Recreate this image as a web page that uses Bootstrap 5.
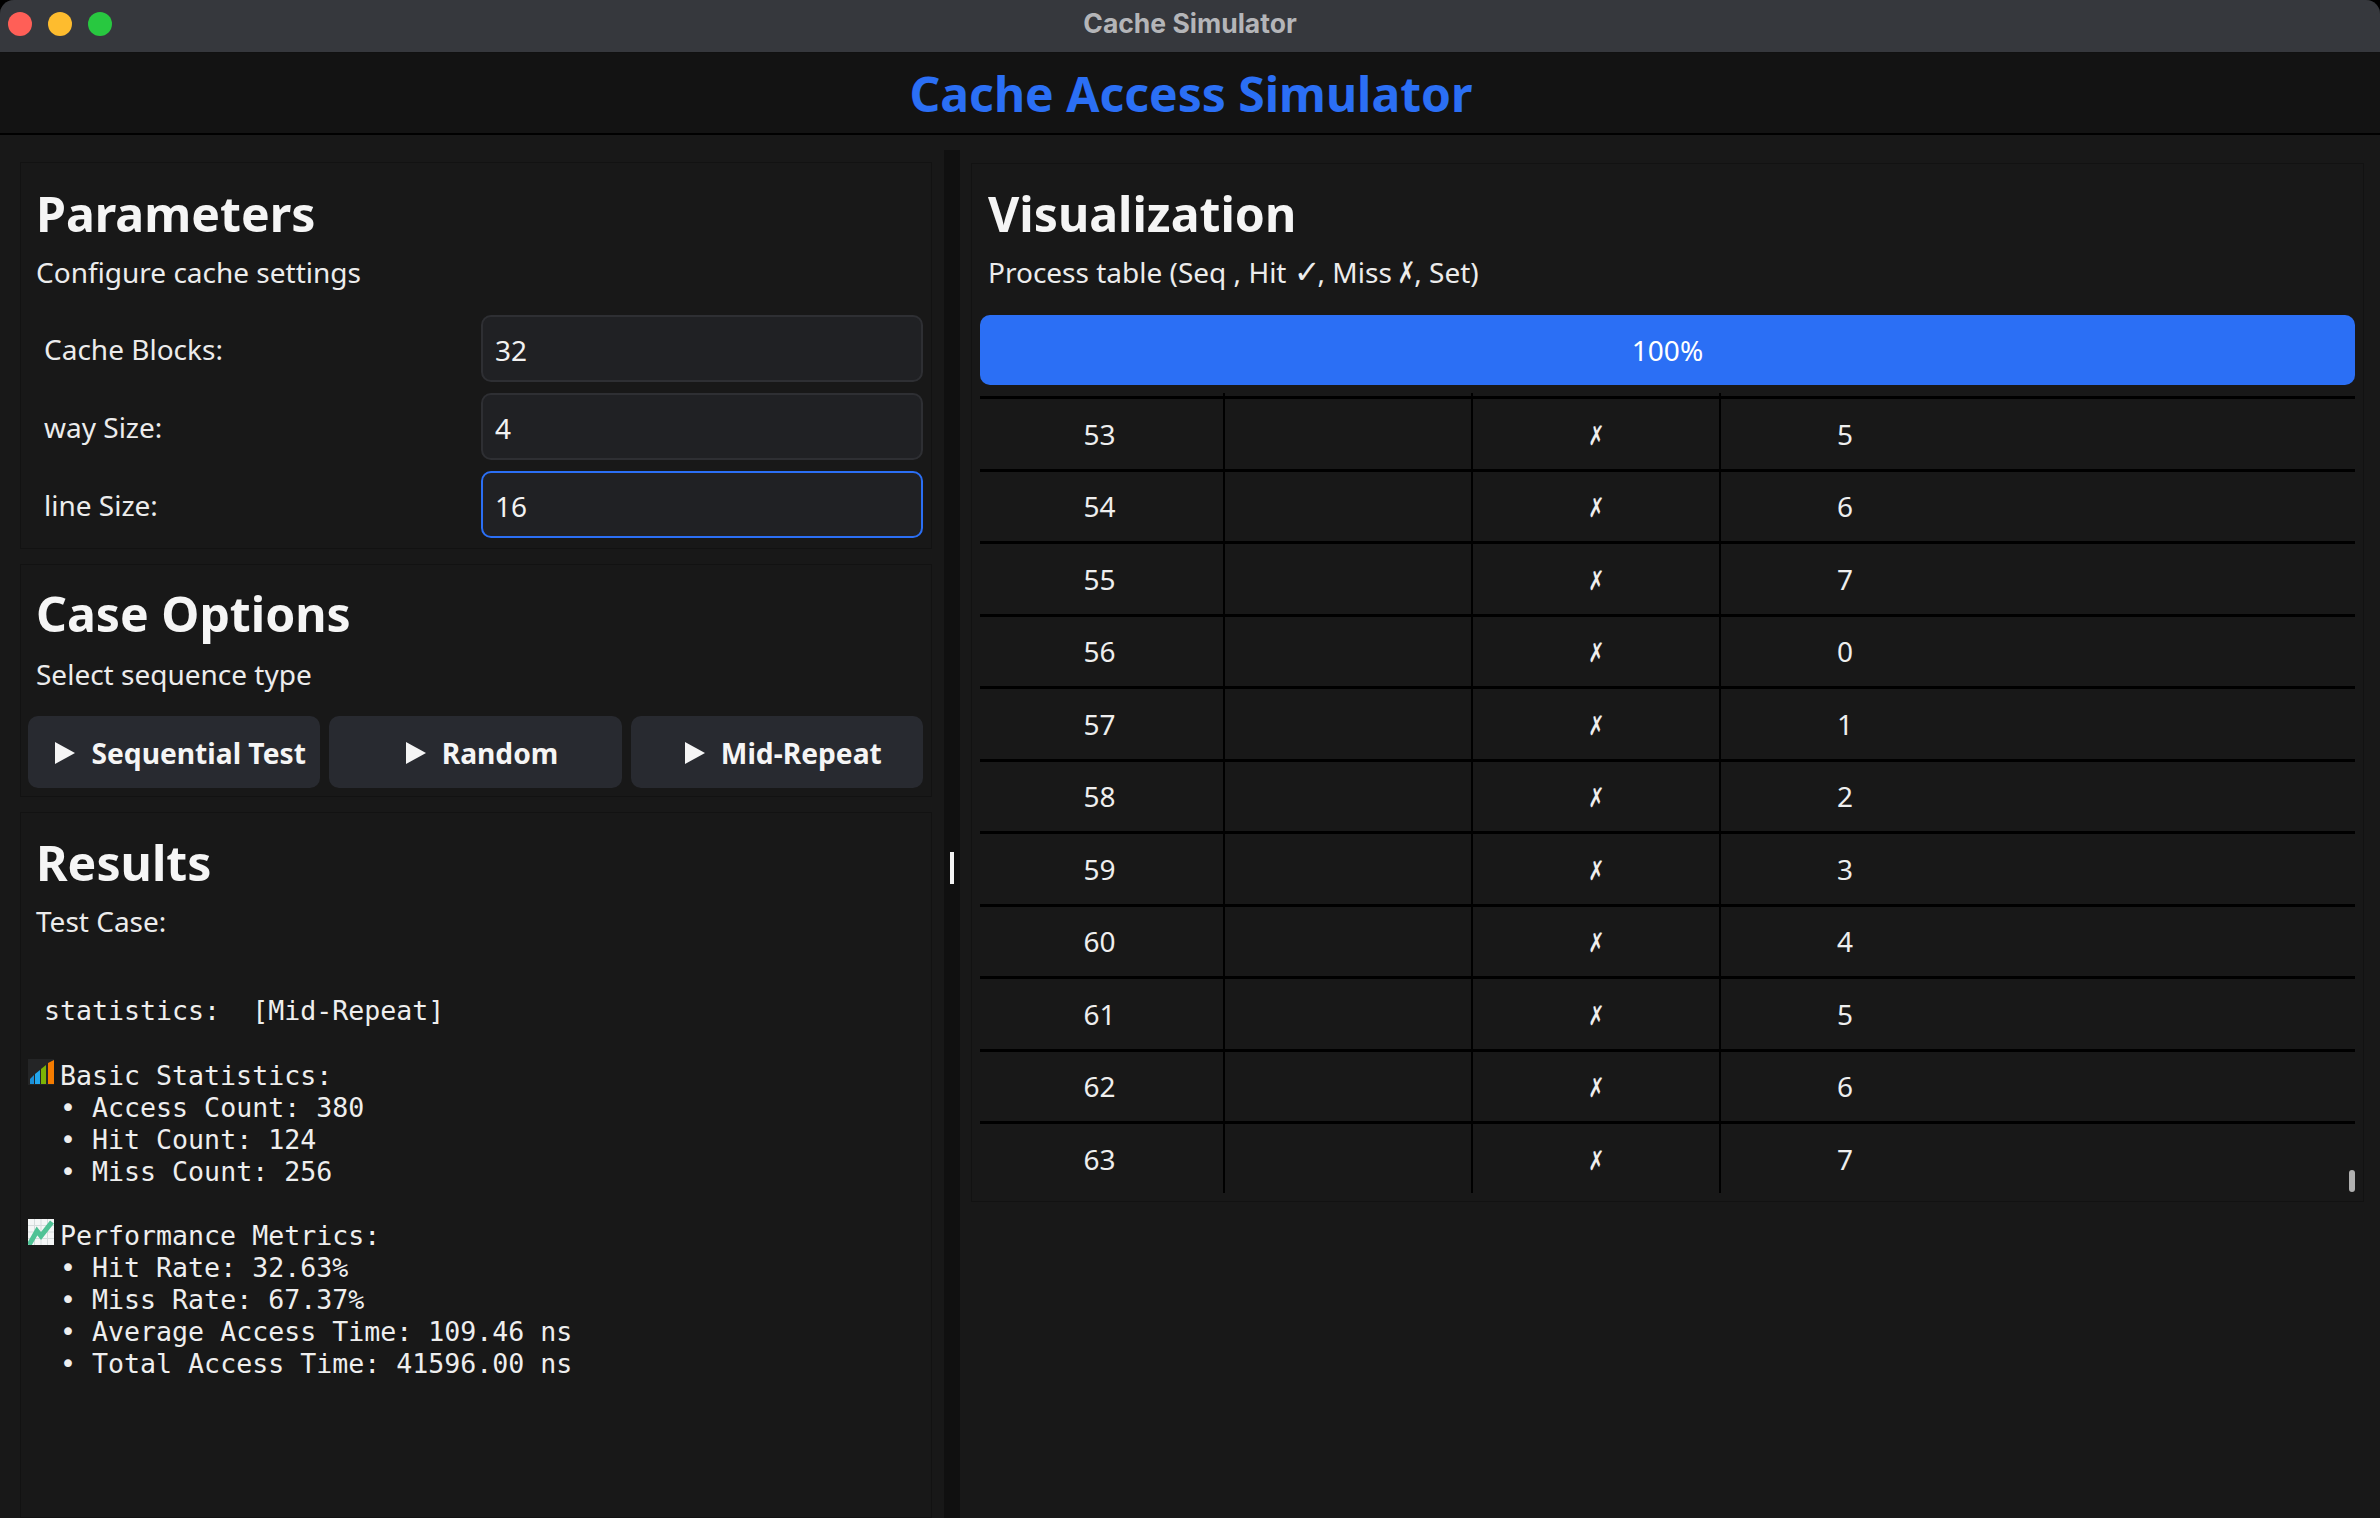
<!DOCTYPE html>
<html lang="en">
<head>
    <meta charset="UTF-8">
    <meta name="viewport" content="width=device-width, initial-scale=1.0">
    <title>Cache Simulator</title>
    <link rel="stylesheet" href="https://cdn.jsdelivr.net/npm/bootstrap@5.3.0/dist/css/bootstrap.min.css">
    <style>
        html, body { height: 100%; }
        body {
            background: #000;
            color: #f2f2f2;
            font-family: "Noto Sans", sans-serif;
            font-size: 28px;
            overflow: hidden;
        }
        .app-window { height: 1518px; background: #181818; border-radius: 14px 14px 0 0; overflow: hidden; }
        .title-bar {
            height: 53px;
            background: #36383d;
            border-bottom: 1px solid #111;
            position: relative;
            padding-bottom: 5px;
        }
        .light { width: 24px; height: 24px; border-radius: 50%; }
        .light-red { background: #ff5f57; }
        .light-yellow { background: #febc2e; }
        .light-green { background: #28c840; }
        .lights { padding-left: 8px; gap: 16px; top: 12px; }
        .title-text {
            font-family: "Inter", "Liberation Sans", sans-serif;
            font-weight: 700;
            font-size: 26.5px;
            color: #b4b5b8;
        }
        .app-header {
            height: 82px;
            background: #131313;
            border-bottom: 2px solid #000;
            padding: 1px 0 0 2px;
        }
        .app-header h1 { color: #2b6ff5; font-size: 48px; font-weight: 700; margin: 0; line-height: 64px; }
        .left-col { width: 912px; margin-left: 20px; padding-top: 27px; gap: 15px; flex: none; }
        .splitter {
            width: 16px;
            margin: 15px 11px 0 12px;
            background: #101010;
            flex: none;
        }
        .splitter-handle { width: 4px; height: 32px; background: #f2f2f2; margin-top: 702px; margin-left: 6px; }
        .right-col { width: 1393px; padding-top: 28px; flex: none; }
        .panel-box { background: #181818; border: 1px solid #121212; padding-left: 7px; padding-right: 8px; }
        .panel-title { font-size: 48.2px; font-weight: 700; line-height: 64px; margin: 0 0 0 8px; color: #f5f5f5; }
        .panel-sub { font-size: 28px; line-height: 38px; margin: 8px 0 0 8px; color: #ececec; }
        .params-box { height: 387px; padding-top: 18px; }
        .field-rows { margin-top: 24px; gap: 11px; }
        .field-label { width: 453px; padding-left: 16px; font-size: 28px; color: #ececec; }
        .field-input.form-control {
            height: 67px;
            flex: 1;
            background: #202124;
            border: 2px solid #2e2f33;
            border-radius: 10px;
            color: #f2f2f2;
            font-size: 28px;
            padding: 2px 12px 0;
            box-shadow: none;
        }
        .field-input.is-current { border-color: #2b6ff5; }
        .case-box { height: 233px; padding-top: 16px; }
        .case-box .panel-sub { margin-top: 10px; }
        .case-btns { margin-top: 23px; gap: 9px; }
        .case-btn.btn {
            flex: 1;
            height: 72px;
            background: #282a30;
            border: 0;
            border-radius: 10px;
            color: #f5f5f5;
            font-size: 28.2px;
            font-weight: 700;
            gap: 16px;
            padding: 2px 0 0 13px;
        }
        .results-box { flex: 1; padding-top: 17px; }
        .results-text {
            font-family: "DejaVu Sans Mono", monospace;
            font-size: 26.6px;
            line-height: 31.9px;
            margin: 55px 0 0 0;
            color: #eee;
            overflow: hidden;
        }
        .emoji-cell { display: inline-block; width: 32px; height: 26px; vertical-align: 0; }
        .emoji-cell svg { display: block; }
        .viz-box { height: 1039px; padding-top: 17px; padding-left: 8px; }
        .viz-bar.progress { height: 70px; margin-top: 24px; background: #202124; border-radius: 10px; }
        .viz-bar .progress-bar { background: #2b6ff5; font-size: 28px; color: #fff; }
        .table-wrap { height: 800px; margin-top: 8px; overflow: hidden; position: relative; }
        .seq-table.table { margin: 0; table-layout: fixed; width: 100%; border-collapse: separate; border-spacing: 0; }
        .seq-table.table > * > * > * {
            background: #181818;
            color: #eee;
            font-size: 28px;
            text-align: center;
            vertical-align: middle;
            padding: 0;
            box-shadow: none;
            border-bottom: 3px solid #000;
            border-right: 2px solid #000;
            height: 72.5px;
        }
        .seq-table.table > thead > tr > th { height: 6px; }
        .seq-table.table > * > * > *:nth-child(n+4) { border-right: 0; }
        .seq-table.table > tbody > tr > td:first-child { padding-right: 4px; }
        .seq-table.table .col-seq { width: 245px; }
        .seq-table.table .col-mid { width: 248px; }
        .mark-check { font-family: "DejaVu Sans", sans-serif; font-size: 32px; line-height: 1; margin-right: -3px; }
        .mark-cross {
            display: inline-block;
            font-family: "DejaVu Sans", sans-serif;
            line-height: 1;
            transform: scaleX(.72);
        }
        .panel-sub .mark-cross { font-weight: 700; font-size: 30px; margin: 0 -5px; }
        .seq-table .mark-cross { font-size: 27px; margin-left: 1px; }
        .scroll-thumb { position: absolute; right: 0; bottom: 1px; width: 6px; height: 22px; border-radius: 3px; background: #b0b0b0; }
    </style>
</head>
<body>
    <div class="app-window d-flex flex-column">
        <div class="title-bar d-flex align-items-center justify-content-center">
            <div class="lights d-flex position-absolute start-0">
                <div class="light light-red"></div>
                <div class="light light-yellow"></div>
                <div class="light light-green"></div>
            </div>
            <div class="title-text">Cache Simulator</div>
        </div>
        <div class="app-header d-flex align-items-center justify-content-center">
            <h1>Cache Access Simulator</h1>
        </div>
        <div class="d-flex flex-grow-1">
            <div class="left-col d-flex flex-column">
                <div class="panel-box params-box">
                    <h2 class="panel-title">Parameters</h2>
                    <p class="panel-sub">Configure cache settings</p>
                    <div class="field-rows d-flex flex-column">
                        <div class="d-flex align-items-center">
                            <label class="field-label">Cache Blocks:</label>
                            <input class="form-control field-input" value="32">
                        </div>
                        <div class="d-flex align-items-center">
                            <label class="field-label">way Size:</label>
                            <input class="form-control field-input" value="4">
                        </div>
                        <div class="d-flex align-items-center">
                            <label class="field-label">line Size:</label>
                            <input class="form-control field-input is-current" value="16">
                        </div>
                    </div>
                </div>
                <div class="panel-box case-box">
                    <h2 class="panel-title">Case Options</h2>
                    <p class="panel-sub">Select sequence type</p>
                    <div class="case-btns d-flex">
                        <button class="btn case-btn d-flex align-items-center justify-content-center">
                            <svg width="20" height="22" viewBox="0 0 20 22"><polygon points="0,0 20,11 0,22" fill="#f5f5f5"/></svg>Sequential Test
                        </button>
                        <button class="btn case-btn d-flex align-items-center justify-content-center">
                            <svg width="20" height="22" viewBox="0 0 20 22"><polygon points="0,0 20,11 0,22" fill="#f5f5f5"/></svg>Random
                        </button>
                        <button class="btn case-btn d-flex align-items-center justify-content-center">
                            <svg width="20" height="22" viewBox="0 0 20 22"><polygon points="0,0 20,11 0,22" fill="#f5f5f5"/></svg>Mid-Repeat
                        </button>
                    </div>
                </div>
                <div class="panel-box results-box">
                    <h2 class="panel-title">Results</h2>
                    <p class="panel-sub">Test Case:</p>
<pre class="results-text"> statistics:  [Mid-Repeat]

<span class="emoji-cell"><svg width="26" height="26" viewBox="0 0 26 26"><rect width="26" height="26" fill="#242526"/><polygon points="2,25 2,20 6,16 6,25" fill="#1a8fd8"/><polygon points="7,25 7,15 12,11 12,25" fill="#22a7ee"/><polygon points="13,25 13,10 18,6 18,25" fill="#7cb305"/><polygon points="20,25 20,4 26,1 26,25" fill="#f57c00"/></svg></span>Basic Statistics:
  • Access Count: 380
  • Hit Count: 124
  • Miss Count: 256

<span class="emoji-cell"><svg width="26" height="26" viewBox="0 0 26 26"><rect width="26" height="26" fill="#f4f6f6"/><path d="M0 6.5H26M0 13H26M0 19.5H26M6.5 0V26M13 0V26M19.5 0V26" stroke="#d5dcdc" stroke-width="1"/><path d="M1 26 L9 12 L13 17 L24 3" fill="none" stroke="#4fc295" stroke-width="5"/></svg></span>Performance Metrics:
  • Hit Rate: 32.63%
  • Miss Rate: 67.37%
  • Average Access Time: 109.46 ns
  • Total Access Time: 41596.00 ns</pre>
                </div>
            </div>
            <div class="splitter">
                <div class="splitter-handle"></div>
            </div>
            <div class="right-col">
                <div class="panel-box viz-box">
                    <h2 class="panel-title">Visualization</h2>
                    <p class="panel-sub">Process table (Seq , Hit <span class="mark-check">✓</span>, Miss <span class="mark-cross">✗</span>, Set)</p>
                    <div class="progress viz-bar">
                        <div class="progress-bar w-100">100%</div>
                    </div>
                    <div class="table-wrap">
                        <table class="table seq-table">
                            <thead>
                                <tr><th class="col-seq"></th><th class="col-mid"></th><th class="col-mid"></th><th class="col-mid"></th><th></th></tr>
                            </thead>
                            <tbody id="seqRows"></tbody>
                        </table>
                        <div class="scroll-thumb"></div>
                    </div>
                </div>
            </div>
        </div>
    </div>
    <script>
        // rows as they stand scrolled to the end of the run
        const rows = [[53,5],[54,6],[55,7],[56,0],[57,1],[58,2],[59,3],[60,4],[61,5],[62,6],[63,7]];
        document.getElementById('seqRows').innerHTML = rows.map(r =>
            `<tr><td>${r[0]}</td><td></td><td><span class="mark-cross">✗</span></td><td>${r[1]}</td><td></td></tr>`
        ).join('');
    </script>
    <script src="https://cdn.jsdelivr.net/npm/bootstrap@5.3.0/dist/js/bootstrap.bundle.min.js"></script>
</body>
</html>
